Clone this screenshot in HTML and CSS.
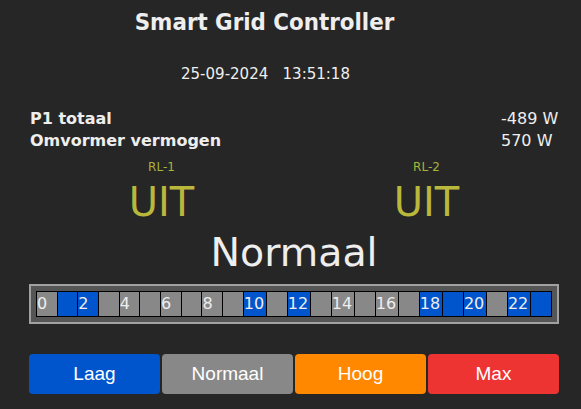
FILE: index.html
```html
<!DOCTYPE html>
<html lang="nl">
<head>
<meta charset="utf-8">
<title>Smart Grid Controller</title>
<link rel="stylesheet" href="styles.css">
</head>
<body>
<div class="page">
  <h1 class="title">Smart Grid Controller</h1>
  <div class="datetime">25-09-2024&nbsp;&nbsp;&nbsp;13:51:18</div>

  <div class="readings">
    <div class="label">P1 totaal</div><div class="value">-489 W</div>
    <div class="label">Omvormer vermogen</div><div class="value">570 W</div>
  </div>

  <div class="relays">
    <div class="relay">
      <div class="relay-name">RL-1</div>
      <div class="relay-state">UIT</div>
    </div>
    <div class="relay">
      <div class="relay-name">RL-2</div>
      <div class="relay-state">UIT</div>
    </div>
  </div>

  <div class="mode">Normaal</div>

  <div class="schedule">
    <div class="hours">
      <div class="hour">0</div>
      <div class="hour on"></div>
      <div class="hour on">2</div>
      <div class="hour"></div>
      <div class="hour">4</div>
      <div class="hour"></div>
      <div class="hour">6</div>
      <div class="hour"></div>
      <div class="hour">8</div>
      <div class="hour"></div>
      <div class="hour on">10</div>
      <div class="hour"></div>
      <div class="hour on">12</div>
      <div class="hour"></div>
      <div class="hour">14</div>
      <div class="hour"></div>
      <div class="hour">16</div>
      <div class="hour"></div>
      <div class="hour on">18</div>
      <div class="hour on"></div>
      <div class="hour on">20</div>
      <div class="hour"></div>
      <div class="hour on">22</div>
      <div class="hour on"></div>
    </div>
  </div>

  <div class="buttons">
    <button class="btn btn-low">Laag</button>
    <button class="btn btn-normal">Normaal</button>
    <button class="btn btn-high">Hoog</button>
    <button class="btn btn-max">Max</button>
  </div>
</div>
</body>
</html>
```
FILE: styles.css
```css
html, body {
  margin: 0;
  padding: 0;
  background: #262626;
}
body {
  font-family: "DejaVu Sans", sans-serif;
  color: #eeeeee;
}
.page {
  width: 530px;
  margin-left: 29px;
}
.title {
  margin: 9px 0 0 0;
  padding-right: 59px;
  font-family: "DejaVu Sans Condensed", "DejaVu Sans", sans-serif;
  font-weight: bold;
  font-size: 23.8px;
  line-height: 27.7px;
  text-align: center;
}
.datetime {
  margin-top: 27.3px;
  padding-right: 57px;
  font-family: "DejaVu Sans Condensed", "DejaVu Sans", sans-serif;
  font-size: 16.7px;
  line-height: 19.2px;
  text-align: center;
}
.readings {
  margin-top: 24.3px;
  display: grid;
  grid-template-columns: 1fr 58px;
  font-size: 16px;
  line-height: 22px;
}
.readings .label {
  font-weight: bold;
  padding-left: 1px;
}
.relays {
  margin-top: 8.4px;
  display: grid;
  grid-template-columns: 1fr 1fr;
  text-align: center;
}
.relay-name {
  font-size: 12px;
  line-height: 14px;
  color: #a6b43a;
}
.relay-state {
  margin-top: 5px;
  font-size: 40px;
  line-height: 46.5px;
  color: #b9b73c;
}
.mode {
  margin-top: 3.8px;
  font-size: 39.5px;
  line-height: 46px;
  text-align: center;
}
.schedule {
  margin-top: 8.7px;
  border: 2px solid #a0a0a0;
  background: #555555;
  padding: 5px;
}
.hours {
  display: flex;
  gap: 1px;
  padding: 1px;
  background: #000000;
}
.hour {
  flex: 1 1 0;
  height: 24px;
  padding: 0 2px 0 0;
  background: #888888;
  font-size: 16px;
  line-height: 24px;
  color: #eeeeee;
  white-space: nowrap;
}
.hour.on {
  background: #0055cc;
}
.buttons {
  margin-top: 30px;
  display: grid;
  grid-template-columns: repeat(4, 1fr);
  gap: 2px;
}
.btn {
  height: 40px;
  border: none;
  border-radius: 4px;
  font-family: "Liberation Sans", Arial, sans-serif;
  font-size: 19px;
  color: #ffffff;
  padding: 0;
}
.btn-low { background: #0055cc; }
.btn-normal { background: #888888; }
.btn-high { background: #ff8800; }
.btn-max { background: #ee3333; }
```
